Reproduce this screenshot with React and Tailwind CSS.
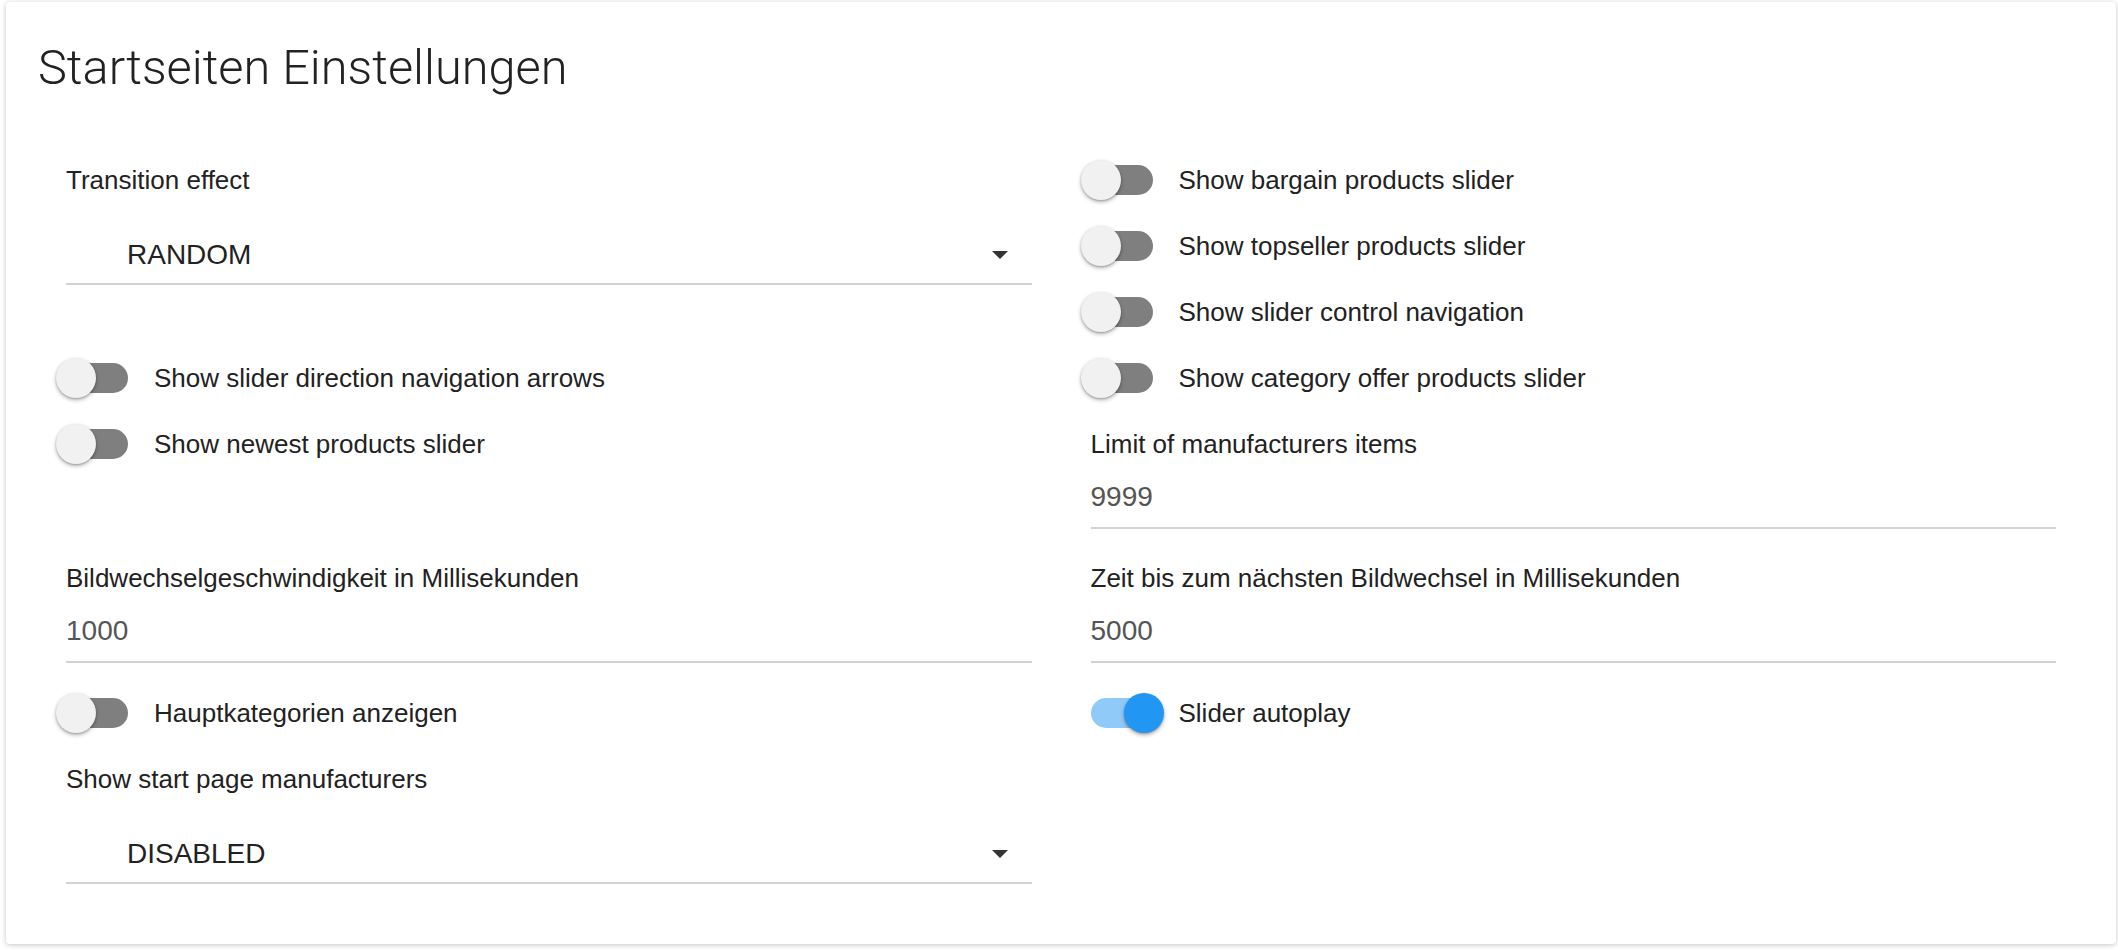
import React from "react";

const leftColumn = [
  { type: "select", label: "Transition effect", value: "RANDOM", className: "" },
  { type: "toggle", label: "Show slider direction navigation arrows", on: false, className: "mt-[75px]" },
  { type: "toggle", label: "Show newest products slider", on: false, className: "mt-[30px]" },
  { type: "text", label: "Bildwechselgeschwindigkeit in Millisekunden", value: "1000", className: "mt-[98px]" },
  { type: "toggle", label: "Hauptkategorien anzeigen", on: false, className: "mt-[32px]" },
  { type: "select", label: "Show start page manufacturers", value: "DISABLED", className: "mt-[30px]" },
];

const rightColumn = [
  { type: "toggle", label: "Show bargain products slider", on: false, className: "" },
  { type: "toggle", label: "Show topseller products slider", on: false, className: "mt-[30px]" },
  { type: "toggle", label: "Show slider control navigation", on: false, className: "mt-[30px]" },
  { type: "toggle", label: "Show category offer products slider", on: false, className: "mt-[30px]" },
  { type: "text", label: "Limit of manufacturers items", value: "9999", className: "mt-[30px]" },
  { type: "text", label: "Zeit bis zum nächsten Bildwechsel in Millisekunden", value: "5000", className: "mt-[31px]" },
  { type: "toggle", label: "Slider autoplay", on: true, className: "mt-[32px]" },
];

function Toggle({ label, on, className }) {
  return (
    <div className={`flex h-[36px] items-center ${className}`}>
      <div
        className={`relative h-[30px] w-[62px] shrink-0 rounded-full ${
          on ? "bg-[#90caf9]" : "bg-[#7f7f7f]"
        }`}
      >
        <span
          className={`absolute top-[-5px] h-[40px] w-[40px] rounded-full shadow-[0_2px_4px_rgba(0,0,0,0.28),0_1px_2px_rgba(0,0,0,0.2)] ${
            on ? "right-[-11px] bg-[#2196f3]" : "left-[-10px] bg-[#f1f1f1]"
          }`}
        />
      </div>
      <span className="ml-[26px] text-[26px] leading-[36px] text-[#222]">{label}</span>
    </div>
  );
}

function TextField({ label, value, className }) {
  return (
    <div className={className}>
      <div className="h-[36px] text-[26px] leading-[36px] text-[#222]">{label}</div>
      <div className="mt-[17px] h-[36px] text-[28px] leading-[36px] text-[#555]">{value}</div>
      <div className="mt-[12px] h-[2px] bg-[#d2d2d2]" />
    </div>
  );
}

function SelectField({ label, value, className }) {
  return (
    <div className={className}>
      <div className="h-[36px] text-[26px] leading-[36px] text-[#222]">{label}</div>
      <div className="mt-[39px] flex h-[36px] items-center justify-between pl-[61px] pr-[24px]">
        <span className="text-[28px] leading-[36px] text-[#222]">{value}</span>
        <svg width="16" height="8" viewBox="0 0 16 8">
          <path d="M0 0h16L8 8z" fill="#333" />
        </svg>
      </div>
      <div className="mt-[10px] h-[2px] bg-[#d2d2d2]" />
    </div>
  );
}

function Field(props) {
  if (props.type === "toggle") return <Toggle {...props} />;
  if (props.type === "select") return <SelectField {...props} />;
  return <TextField {...props} />;
}

export default function App() {
  return (
    <div className="min-h-screen bg-white pl-[6px] pr-[2px] pt-[2px] font-['Liberation_Sans',Arial,sans-serif]">
      <div className="rounded-[4px] bg-white px-[60px] pb-[60px] pt-[38px] shadow-[0_1px_6px_rgba(0,0,0,0.12),0_1px_4px_rgba(0,0,0,0.12)]">
        <h1 className="ml-[-28px] h-[56px] font-['Roboto',sans-serif] text-[48.7px] font-light leading-[56px] text-[#222]">
          Startseiten Einstellungen
        </h1>
        <div className="mt-[66px] grid grid-cols-2 items-start gap-x-[59px]">
          <div className="flex flex-col">
            {leftColumn.map((item) => (
              <Field key={item.label} {...item} />
            ))}
          </div>
          <div className="flex flex-col">
            {rightColumn.map((item) => (
              <Field key={item.label} {...item} />
            ))}
          </div>
        </div>
      </div>
    </div>
  );
}
